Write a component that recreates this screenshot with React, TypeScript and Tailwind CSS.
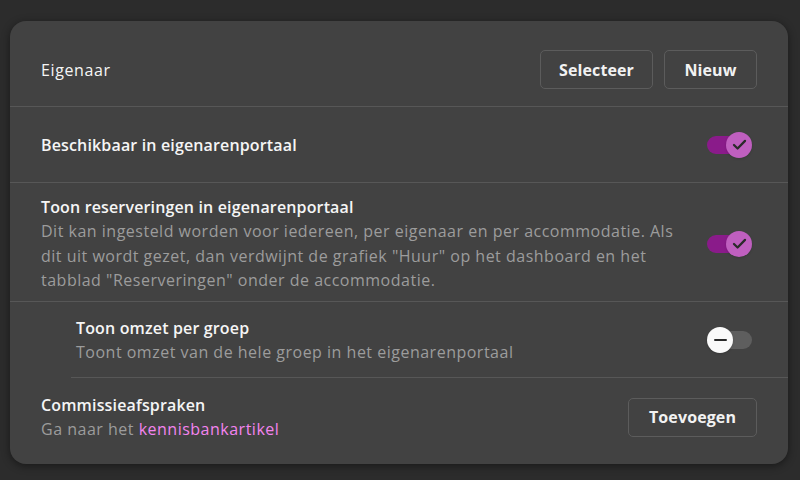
import React from 'react'

const font = { fontFamily: '"Open Sans", "Noto Sans", sans-serif' }

function Toggle({ on }: { on: boolean }) {
  return (
    <div className="relative w-[45px] h-[26px] shrink-0">
      <div
        className={
          on
            ? 'absolute left-0 top-[4px] w-[38px] h-[18px] rounded-full bg-[#8a1b8a]'
            : 'absolute right-0 top-[4px] w-[38px] h-[18px] rounded-full bg-[#5e5e5e]'
        }
      />
      {on ? (
        <div className="absolute right-0 top-0 w-[26px] h-[26px] rounded-full bg-[#bf5fbf] flex items-center justify-center shadow">
          <svg width="17" height="17" viewBox="0 0 16 16" fill="none">
            <path d="M2.8 8.4l3.4 3.4L13.2 4.6" stroke="#2a2a2a" strokeWidth="2.1" strokeLinecap="round" strokeLinejoin="round" />
          </svg>
        </div>
      ) : (
        <div className="absolute left-0 top-0 w-[26px] h-[26px] rounded-full bg-[#fafafa] flex items-center justify-center shadow">
          <div className="w-[13px] h-[2.5px] bg-[#2a2a2a] rounded-sm" />
        </div>
      )}
    </div>
  )
}

function Button({ children, w }: { children: React.ReactNode; w: string }) {
  return (
    <button className={`${w} h-[39px] rounded-[5px] border border-[#5c5c5c] text-[16px] font-bold tracking-[0.1px] text-[#f2f2f2] flex items-center justify-center`}>
      {children}
    </button>
  )
}

export default function App() {
  return (
    <div style={font} className="w-[800px] h-[480px] bg-[#2c2c2c] pt-[21px] pl-[10px]">
      <div className="w-[778px] h-[443px] bg-[#424242] rounded-[16px] shadow-[0_2px_8px_rgba(0,0,0,0.45)] overflow-hidden">
        <div className="h-[86px] pt-[12px] px-[31px] flex items-center justify-between border-b border-[#575757]">
          <span className="text-[16px] text-[#f5f5f5] tracking-[0.6px]">Eigenaar</span>
          <div className="flex gap-[11px]">
            <Button w="w-[113px]">Selecteer</Button>
            <Button w="w-[93px]">Nieuw</Button>
          </div>
        </div>

        <div className="h-[76px] pl-[31px] pr-[36px] flex items-center justify-between border-b border-[#575757]">
          <span className="text-[16px] text-[#f5f5f5] font-semibold tracking-[0.15px]">Beschikbaar in eigenarenportaal</span>
          <Toggle on />
        </div>

        <div className="h-[119px] pt-[3px] pl-[31px] pr-[36px] flex items-center justify-between border-b border-[#575757]">
          <div className="text-[16px] leading-[24.5px]">
            <div className="text-[#f5f5f5] font-semibold tracking-[0.15px]">Toon reserveringen in eigenarenportaal</div>
            <div className="text-[#9c9c9c] tracking-[0.5px]">
              Dit kan ingesteld worden voor iedereen, per eigenaar en per accommodatie. Als
              <br />
              dit uit wordt gezet, dan verdwijnt de grafiek "Huur" op het dashboard en het
              <br />
              tabblad "Reserveringen" onder de accommodatie.
            </div>
          </div>
          <Toggle on />
        </div>

        <div className="pl-[61px]">
          <div className="h-[76px] pt-[1px] pl-[5px] pr-[36px] flex items-center justify-between border-b border-[#575757]">
            <div className="text-[16px] leading-[24.5px]">
              <div className="text-[#f5f5f5] font-semibold tracking-[0.15px]">Toon omzet per groep</div>
              <div className="text-[#9c9c9c] tracking-[0.5px]">Toont omzet van de hele groep in het eigenarenportaal</div>
            </div>
            <Toggle on={false} />
          </div>
        </div>

        <div className="h-[78px] px-[31px] flex items-center justify-between">
          <div className="text-[16px] leading-[24.5px]">
            <div className="text-[#f5f5f5] font-semibold tracking-[0.15px]">Commissieafspraken</div>
            <div className="text-[#9c9c9c] tracking-[0.5px]">
              Ga naar het <span className="text-[#f384ef]">kennisbankartikel</span>
            </div>
          </div>
          <Button w="w-[129px]">Toevoegen</Button>
        </div>
      </div>
    </div>
  )
}
